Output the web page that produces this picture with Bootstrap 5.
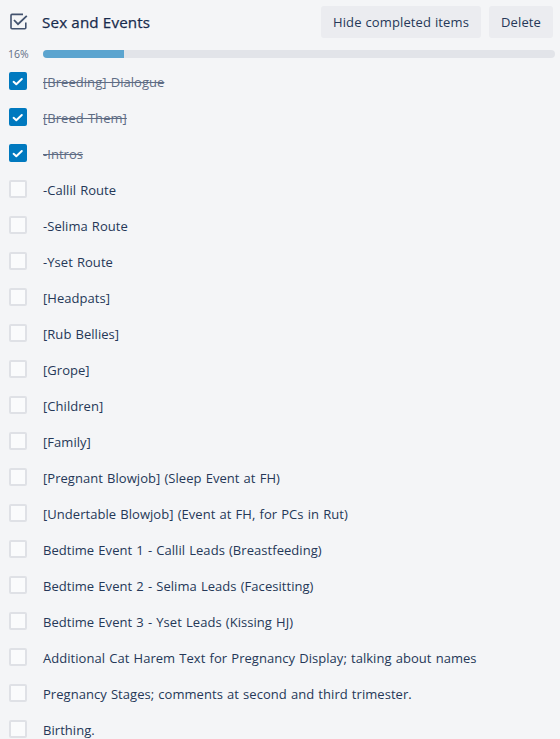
<!DOCTYPE html>
<html lang="en">
<head>
<meta charset="utf-8">
<meta name="viewport" content="width=device-width, initial-scale=1">
<title>Sex and Events</title>
<link href="https://cdn.jsdelivr.net/npm/bootstrap@5.3.0/dist/css/bootstrap.min.css" rel="stylesheet">
<style>
  body { background: #f4f5f7; color: #172b4d; font-family: "Open Sans", "Noto Sans", sans-serif; font-size: 13px; line-height: 20px; height: 739px; overflow: hidden; }
  .checklist-head { padding: 6px 7px 0 9px; height: 44px; }
  .head-icon { width: 20px; height: 20px; margin: 5px 13px 0 0; }
  .head-title { font-size: 15.2px; line-height: 20px; font-weight: 500; padding-top: 6px; letter-spacing: .14px; -webkit-text-stroke: .25px #172b4d; }
  .btn-subtle { --bs-btn-bg: #ebecf0; --bs-btn-color: #253858; --bs-btn-border-width: 0; --bs-btn-border-radius: 3px; --bs-btn-font-size: 13px; --bs-btn-hover-bg: #dfe1e6; height: 32px; padding: 0; line-height: 32px; letter-spacing: .13px; word-spacing: .3px; }
  .btn-hide { width: 160px; }
  .btn-delete { width: 64px; }
  .meter-row { height: 20px; padding-right: 5px; }
  .percent { width: 43px; padding-left: 8px; font-size: 10.5px; color: #5e6c84; letter-spacing: 0; }
  .meter { --bs-progress-height: 8px; --bs-progress-bg: #e2e4e9; --bs-progress-border-radius: 4px; --bs-progress-bar-bg: #5ba4cf; }
  .task { height: 36px; padding: 8px 0 0 9px; }
  .task .form-check-input { width: 18px; height: 18px; margin: 0 16px 0 0; border: 2px solid #dfe1e6; border-radius: 2px; background-color: #fafbfc; }
  .task .form-check-input:checked { background-color: #0079bf; border-color: #0079bf; background-image: none; }
  .task label { color: #253858; white-space: nowrap; letter-spacing: .045px; word-spacing: .7px; }
  .task .form-check-input:checked ~ label { color: #5e6c84; text-decoration: line-through; }
  .tick { position: absolute; left: 9px; top: 8px; width: 18px; height: 18px; pointer-events: none; }
</style>
<script src="https://cdn.jsdelivr.net/npm/bootstrap@5.3.0/dist/js/bootstrap.bundle.min.js" defer></script>
</head>
<body>
<header class="checklist-head d-flex align-items-start">
  <svg class="head-icon flex-shrink-0" viewBox="0 0 20 20" fill="none" stroke="#42526e" stroke-width="1.6" stroke-linejoin="round"><path d="M14 3.4H3Q2 3.4 2 4.4V16.8Q2 17.8 3 17.8H15.8Q16.8 17.8 16.8 16.8V11.4"/><path d="M5 9L9 13.2L17.8 4.8" stroke-width="1.8" stroke-linejoin="miter"/></svg>
  <h3 class="head-title mb-0 me-auto">Sex and Events</h3>
  <div class="d-flex gap-2">
    <button class="btn btn-subtle btn-hide" type="button">Hide completed items</button>
    <button class="btn btn-subtle btn-delete" type="button">Delete</button>
  </div>
</header>
<div class="meter-row d-flex align-items-center">
  <span class="percent flex-shrink-0">16%</span>
  <div class="progress meter flex-grow-1" role="progressbar" aria-valuenow="16" aria-valuemin="0" aria-valuemax="100"><div class="progress-bar" style="width:15.8%"></div></div>
</div>
<main id="tasks" class="d-flex flex-column"></main>
<script>
  const done = ["[Breeding] Dialogue", "[Breed Them]", "-Intros"];
  const open = ["-Callil Route", "-Selima Route", "-Yset Route", "[Headpats]", "[Rub Bellies]", "[Grope]", "[Children]", "[Family]",
    "[Pregnant Blowjob] (Sleep Event at FH)", "[Undertable Blowjob] (Event at FH, for PCs in Rut)",
    "Bedtime Event 1 - Callil Leads (Breastfeeding)", "Bedtime Event 2 - Selima Leads (Facesitting)", "Bedtime Event 3 - Yset Leads (Kissing HJ)",
    "Additional Cat Harem Text for Pregnancy Display; talking about names", "Pregnancy Stages; comments at second and third trimester.", "Birthing."];
  const tick = '<svg class="tick" viewBox="0 0 18 18" fill="none" stroke="#fff" stroke-width="2" stroke-linecap="round" stroke-linejoin="round"><path d="M4.6 9.8L7.3 12.2L12.8 7"/></svg>';
  document.getElementById("tasks").innerHTML = done.concat(open).map((text, i) => {
    const checked = i < done.length;
    return `<div class="task d-flex align-items-start flex-shrink-0 position-relative"><input class="form-check-input flex-shrink-0" type="checkbox" id="t${i}"${checked ? " checked" : ""}>${checked ? tick : ""}<label for="t${i}">${text}</label></div>`;
  }).join("");
</script>
</body>
</html>
